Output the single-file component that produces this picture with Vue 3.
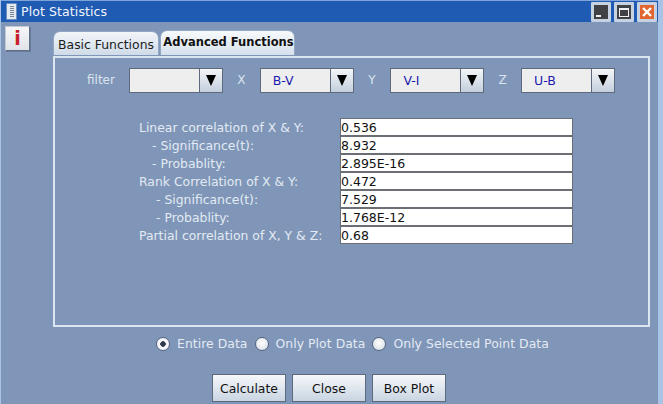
<script setup>
const combos = [
  { label: 'filter', value: '', labelClass: 'lab-filter' },
  { label: 'X', value: 'B-V', labelClass: 'lab-axis' },
  { label: 'Y', value: 'V-I', labelClass: 'lab-axis' },
  { label: 'Z', value: 'U-B', labelClass: 'lab-axis' },
]
const stats = [
  { label: 'Linear correlation of X & Y:', value: '0.536', indent: '' },
  { label: '- Significance(t):', value: '8.932', indent: 'i1' },
  { label: '- Probablity:', value: '2.895E-16', indent: 'i1' },
  { label: 'Rank Correlation of X & Y:', value: '0.472', indent: '' },
  { label: '- Significance(t):', value: '7.529', indent: 'i2' },
  { label: '- Probablity:', value: '1.768E-12', indent: 'i2' },
  { label: 'Partial correlation of X, Y & Z:', value: '0.68', indent: '' },
]
const radios = [
  { label: 'Entire Data', on: true },
  { label: 'Only Plot Data', on: false },
  { label: 'Only Selected Point Data', on: false },
]
const buttons = ['Calculate', 'Close', 'Box Plot']
</script>

<template>
  <div class="window">
    <header class="titlebar">
      <div class="app-icon"><span class="dots"></span></div>
      <span class="title">Plot Statistics</span>
      <div class="controls">
        <button class="ctl ctl-dark"><span class="min-mark"></span></button>
        <button class="ctl ctl-dark"><span class="max-mark"></span></button>
        <button class="ctl ctl-close">
          <svg width="14" height="14" viewBox="0 0 14 14"><path d="M3 3 11 11M11 3 3 11" stroke="#fff" stroke-width="2.4" fill="none"/></svg>
        </button>
      </div>
    </header>

    <div class="body">
      <aside class="side">
        <div class="info">i</div>
      </aside>
      <main class="main">
        <div class="tabs">
          <div class="tab">Basic Functions</div>
          <div class="tab tab-active">Advanced Functions</div>
        </div>
        <section class="panel">
          <div class="filters">
            <div v-for="c in combos" :key="c.label" class="filter">
              <span :class="['filter-label', c.labelClass]">{{ c.label }}</span>
              <div class="combo">
                <span class="combo-value">{{ c.value }}</span>
                <span class="combo-arrow"><i class="tri"></i></span>
              </div>
            </div>
          </div>
          <div class="stats">
            <div v-for="(s, i) in stats" :key="i" class="stat">
              <span :class="['stat-label', s.indent]">{{ s.label }}</span>
              <span class="stat-value">{{ s.value }}</span>
            </div>
          </div>
        </section>
        <div class="radios">
          <label v-for="r in radios" :key="r.label" class="radio">
            <span :class="['dot', { on: r.on }]"></span>
            <span>{{ r.label }}</span>
          </label>
        </div>
        <div class="buttons">
          <button v-for="b in buttons" :key="b" class="btn">{{ b }}</button>
        </div>
      </main>
    </div>
  </div>
</template>

<style scoped>
.window {
  width: 663px;
  height: 404px;
  box-sizing: border-box;
  display: flex;
  flex-direction: column;
  background: #7f96b8;
  font-family: "DejaVu Sans", sans-serif;
  font-size: 12px;
  overflow: hidden;
  border-left: 1px solid #a9c3e6;
  border-right: 5px solid #a9c3e6;
}
.titlebar {
  height: 22px;
  box-sizing: border-box;
  flex: none;
  display: flex;
  align-items: center;
  background: #1f5bb3;
  border-top: 1px solid #7fa4d8;
  padding-left: 5px;
  padding-right: 1px;
}
.app-icon {
  width: 11px;
  height: 17px;
  background: #e4e9f0;
  border: 1px solid #6f8fbf;
  border-radius: 1px;
  display: flex;
  justify-content: center;
  align-items: center;
  box-sizing: border-box;
}
.dots {
  width: 4px;
  height: 11px;
  background: repeating-linear-gradient(0deg, #7a8594 0 1px, transparent 1px 2px);
}
.title {
  color: #f2f6fc;
  font-size: 12.5px;
  margin-left: 4px;
  letter-spacing: 0.1px;
}
.controls {
  margin-left: auto;
  display: flex;
  gap: 3px;
  margin-top: 1px;
}
.ctl {
  width: 20px;
  height: 20px;
  padding: 0;
  box-sizing: border-box;
  border: 3px solid #c6d2e2;
  border-radius: 1px;
  background: #e4e8ee;
  display: flex;
  align-items: center;
  justify-content: center;
}
.ctl-dark {
  background: #3f4144;
}
.ctl-close {
  background: #e2642f;
}
.min-mark {
  width: 5px;
  height: 2px;
  background: #f0f0f0;
  align-self: flex-end;
  margin-bottom: 2px;
  margin-right: 5px;
}
.max-mark {
  width: 10px;
  height: 9px;
  box-sizing: border-box;
  border: 1px solid #f0f0f0;
  border-top-width: 2px;
}
.body {
  flex: 1;
  display: flex;
  min-height: 0;
}
.side {
  width: 52px;
  flex: none;
  padding: 4px 0 0 4px;
  box-sizing: border-box;
}
.info {
  width: 25px;
  height: 25px;
  box-sizing: border-box;
  background: linear-gradient(#f6f6f6, #dfe4ea);
  border: 1px solid;
  border-color: #c2c9d4 #5f6f88 #5f6f88 #c2c9d4;
  box-shadow: 1px 1px 0 #6b7c97;
  color: #c8202a;
  font: bold 19px/22px "DejaVu Sans", sans-serif;
  text-align: center;
}
.main {
  width: 597px;
  flex: none;
  padding-top: 8px;
  display: flex;
  flex-direction: column;
}
.tabs {
  display: flex;
  height: 25px;
  align-items: flex-end;
  gap: 1px;
}
.tab {
  width: 106px;
  height: 24px;
  box-sizing: border-box;
  background: linear-gradient(#f2f5f8, #cfdbe8);
  border: 1px solid #93a7c4;
  border-bottom: none;
  border-radius: 7px 7px 0 0;
  text-align: center;
  line-height: 25px;
  color: #1c1c1c;
  font-size: 12.4px;
  white-space: nowrap;
}
.tab-active {
  width: 135px;
  height: 25px;
  font-weight: bold;
  font-size: 11.5px;
  line-height: 23px;
  padding-left: 2px;
  background: linear-gradient(#f8fafc, #d5e0ec);
  color: #111;
}
.panel {
  height: 271px;
  box-sizing: border-box;
  border: 2px solid #dce6f1;
  margin-top: 1px;
  flex: none;
}
.filters {
  display: flex;
  padding: 9px 0 0 32px;
  height: 36px;
  box-sizing: content-box;
}
.filter {
  display: flex;
  align-items: center;
  height: 26px;
}
.filter-label {
  color: #dbe4ef;
  font-size: 12px;
}
.lab-filter {
  width: 42px;
}
.lab-axis {
  width: 36.7px;
  text-align: center;
}
.combo {
  width: 94px;
  height: 25px;
  box-sizing: border-box;
  border: 1px solid #5e6a7c;
  background: #eeeeee;
  display: flex;
  align-items: center;
}
.combo-value {
  flex: 1;
  color: #1a1aae;
  padding-left: 12px;
  font-size: 12.5px;
}
.combo-arrow {
  width: 23px;
  height: 100%;
  box-sizing: border-box;
  border-left: 1px solid #5e6a7c;
  background: linear-gradient(#f4f6f8, #c3cfdd);
  display: flex;
  align-items: center;
  justify-content: center;
}
.tri {
  width: 0;
  height: 0;
  border-left: 5px solid transparent;
  border-right: 5px solid transparent;
  border-top: 11px solid #000;
}
.stats {
  display: flex;
  flex-direction: column;
  padding: 15px 0 0 84px;
}
.stat {
  display: flex;
  height: 18px;
  align-items: center;
}
.stat-label {
  width: 201px;
  flex: none;
  color: #e3eaf3;
  font-size: 12.4px;
  white-space: nowrap;
}
.i1 {
  padding-left: 13px;
  box-sizing: border-box;
}
.i2 {
  padding-left: 17px;
  box-sizing: border-box;
}
.stat-value {
  width: 233px;
  flex: none;
  height: 18px;
  box-sizing: border-box;
  background: #fff;
  border: 1px solid #6b6f75;
  color: #111;
  font-size: 12.5px;
  line-height: 17px;
}
.radios {
  display: flex;
  padding: 6px 0 0 103px;
  height: 21px;
  box-sizing: content-box;
  flex: none;
}
.radio {
  display: flex;
  align-items: center;
  color: #e3eaf3;
  font-size: 12.4px;
  letter-spacing: 0.05px;
  margin-right: 7px;
  gap: 7px;
}
.dot {
  width: 14px;
  height: 14px;
  box-sizing: border-box;
  border-radius: 50%;
  background: radial-gradient(circle at 50% 40%, #fdfdfd, #d5dde6);
  border: 1px solid #56657c;
  display: flex;
}
.dot.on {
  background: radial-gradient(circle, #2e3a4c 0 2.5px, #f6f8fa 3px);
}
.buttons {
  display: flex;
  gap: 6px;
  padding: 20px 0 0 159px;
  flex: none;
}
.btn {
  width: 74px;
  height: 28px;
  padding: 0;
  box-sizing: border-box;
  border: 1px solid #5e6a7c;
  background: linear-gradient(#f6f8fa, #c9d5e2);
  color: #111;
  font-family: inherit;
  font-size: 12.4px;
}
</style>
